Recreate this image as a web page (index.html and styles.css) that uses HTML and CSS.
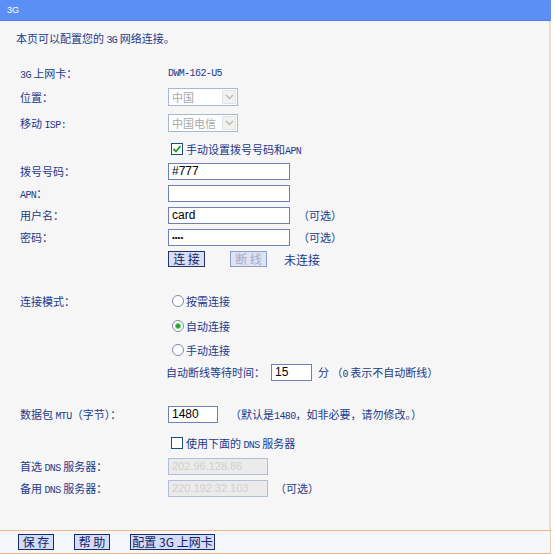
FILE: index.html
```html
<!DOCTYPE html>
<html lang="zh-CN">
<head>
<meta charset="utf-8">
<title>3G</title>
<link rel="stylesheet" href="styles.css">
</head>
<body>
<div class="page">
  <div class="title">3G</div>
  <div class="content">
    <p class="intro">本页可以配置您的 <span class="m">3G</span> 网络连接。</p>
    <div class="form">
      <div class="row r1"><div class="lbl"><span class="m">3G</span> 上网卡：</div><div class="val"><span class="m">DWM-162-U5</span></div></div>
      <div class="row r2"><div class="lbl">位置：</div><div class="val"><div class="sel w70"><span class="sel-text">中国</span><span class="sel-arrow"><svg width="9" height="6" viewBox="0 0 9 6"><path d="M1 1 L4.5 4.5 L8 1" fill="none" stroke="#b9b9b9" stroke-width="1.4"/></svg></span></div></div></div>
      <div class="row r3"><div class="lbl">移动 <span class="m">ISP:</span></div><div class="val"><div class="sel w70"><span class="sel-text">中国电信</span><span class="sel-arrow"><svg width="9" height="6" viewBox="0 0 9 6"><path d="M1 1 L4.5 4.5 L8 1" fill="none" stroke="#b9b9b9" stroke-width="1.4"/></svg></span></div></div></div>
      <div class="row r4"><div class="lbl"></div><div class="val"><span class="cb cb-on"><svg width="10" height="10" viewBox="0 0 10 10"><path d="M1.5 5 L4 7.5 L8.5 2" fill="none" stroke="#1f9d1f" stroke-width="1.8"/></svg></span><span class="cb-label">手动设置拨号号码和<span class="m">APN</span></span></div></div>
      <div class="row r5"><div class="lbl">拨号号码：</div><div class="val"><input class="txt w122" type="text" value="#777"></div></div>
      <div class="row r6"><div class="lbl"><span class="m">APN</span>：</div><div class="val"><input class="txt w122" type="text" value=""></div></div>
      <div class="row r7"><div class="lbl">用户名：</div><div class="val"><input class="txt w122" type="text" value="card"><span class="opt">（可选）</span></div></div>
      <div class="row r8"><div class="lbl">密码：</div><div class="val"><input class="txt w122 pw" type="password" value="card"><span class="opt">（可选）</span></div></div>
      <div class="row r9"><div class="lbl"></div><div class="val"><button class="btn btn-connect">连 接</button><button class="btn btn-off" disabled>断 线</button><span class="status">未连接</span></div></div>

      <div class="row r10"><div class="lbl">连接模式：</div><div class="val"><span class="radio"></span><span class="radio-label">按需连接</span></div></div>
      <div class="row r11"><div class="lbl"></div><div class="val"><span class="radio radio-on"><span class="dot"></span></span><span class="radio-label">自动连接</span></div></div>
      <div class="row r12"><div class="lbl"></div><div class="val"><span class="radio"></span><span class="radio-label">手动连接</span></div></div>
      <div class="row r13"><div class="lbl"></div><div class="val shift"><span>自动断线等待时间：</span><input class="txt w41 wait" type="text" value="15"><span class="unit">分 （<span class="m">0</span> 表示不自动断线）</span></div></div>

      <div class="row r14"><div class="lbl">数据包 <span class="m">MTU</span>（字节）：</div><div class="val"><input class="txt w50" type="text" value="1480"><span class="note">（默认是<span class="m">1480</span>，如非必要，请勿修改。）</span></div></div>
      <div class="row r15"><div class="lbl"></div><div class="val"><span class="cb"></span><span class="cb-label">使用下面的 <span class="m">DNS</span> 服务器</span></div></div>
      <div class="row r16"><div class="lbl">首选 <span class="m">DNS</span> 服务器：</div><div class="val"><input class="txt w100 dis" type="text" value="202.96.128.86" disabled></div></div>
      <div class="row r17"><div class="lbl">备用 <span class="m">DNS</span> 服务器：</div><div class="val"><input class="txt w100 dis" type="text" value="220.192.32.103" disabled><span class="opt2">（可选）</span></div></div>
    </div>
  </div>
  <div class="footer">
    <button class="btn fbtn w36">保 存</button>
    <button class="btn fbtn w36">帮 助</button>
    <button class="btn fbtn w85">配置 3G 上网卡</button>
  </div>
</div>
</body>
</html>
```

FILE: styles.css
```css
html, body {
  margin: 0;
  padding: 0;
  background: #ffffff;
}

body {
  font-family: "Noto Sans CJK SC", "Noto Sans", sans-serif;
  font-size: 11px;
  color: #1b3a8c;
}

.page {
  width: 551px;
  height: 554px;
  display: flex;
  flex-direction: column;
}

.title {
  height: 20px;
  line-height: 20px;
  background: #5b8ff5;
  border-bottom: 1px solid #4d7fe4;
  color: #ffffff;
  font-family: "Liberation Sans", sans-serif;
  font-size: 9px;
  padding-left: 7px;
}

.content {
  flex: 1;
  background: #f6f6f6;
  border-right: 2px solid #f0dcc0;
}

.intro {
  margin: 0;
  padding: 10px 0 0 16px;
  line-height: 14px;
}

.m {
  font-family: "Liberation Mono", monospace;
  font-size: 10px;
  letter-spacing: -0.6px;
}

.form {
  padding-left: 20px;
  margin-top: 14px;
}

.row {
  display: flex;
  align-items: center;
  height: 22px;
}

.lbl {
  width: 148px;
  flex: none;
}

.val {
  display: flex;
  align-items: center;
}

.r2 { margin-top: 2px; }
.r3 { margin-top: 4px; }
.r4 { margin-top: 4px; }
.r10 { margin-top: 20px; }
.r11 { margin-top: 3px; }
.r12 { margin-top: 2px; }
.r14 { margin-top: 20px; }
.r15 { margin-top: 7px; }
.r16 { margin-top: 1px; }

/* fake select */
.sel {
  box-sizing: border-box;
  height: 18px;
  border: 1px solid #a9b6d6;
  background: #ffffff;
  display: flex;
  align-items: center;
  justify-content: space-between;
  padding: 0 1px 0 3px;
}
.w70 { width: 70px; }
.sel-text {
  color: #a8a8a8;
  font-size: 11px;
}
.sel-arrow {
  width: 14px;
  height: 14px;
  box-sizing: border-box;
  background: #f1f1ee;
  border: 1px solid #e0e3ea;
  display: flex;
  align-items: center;
  justify-content: center;
}

/* checkbox */
.cb {
  box-sizing: border-box;
  width: 12px;
  height: 12px;
  margin-left: 3px;
  border: 1px solid #1c4f7c;
  background: #ffffff;
  display: flex;
  align-items: center;
  justify-content: center;
}
.cb-label {
  margin-left: 3px;
}

/* text inputs */
.txt {
  box-sizing: border-box;
  height: 17px;
  border: 1px solid #6f7fb8;
  background: #ffffff;
  padding: 0 3px;
  margin: 0;
  font-family: "Liberation Sans", sans-serif;
  font-size: 12px;
  color: #000000;
  outline: none;
}
.w122 { width: 122px; }
.w41 { width: 41px; }
.w50 { width: 50px; }
.w100 { width: 100px; }
.pw {
  font-size: 8px;
  letter-spacing: 0;
}
.dis {
  background: #ebebeb;
  border-color: #b4bdd8;
  color: #cfcfcf;
  font-size: 11px;
}

.opt {
  margin-left: 8px;
}
.opt2 {
  margin-left: 7px;
}

/* buttons */
.btn {
  box-sizing: border-box;
  height: 16px;
  margin: 0;
  padding: 0;
  border: 1px solid #24346a;
  background: #d8dff3;
  color: #12226a;
  font-family: "Noto Sans CJK SC", sans-serif;
  font-size: 12px;
  line-height: 14px;
}
.btn-connect {
  width: 37px;
}
.btn-off {
  width: 37px;
  margin-left: 25px;
  border-color: #8e9cc8;
  color: #a3abc4;
  background: #dde3f4;
}
.status {
  margin-left: 17px;
  font-size: 12px;
}

/* radio */
.radio {
  box-sizing: border-box;
  width: 12px;
  height: 12px;
  margin-left: 4px;
  border-radius: 50%;
  border: 1px solid #7d8aa6;
  background: #ffffff;
  display: flex;
  align-items: center;
  justify-content: center;
}
.radio-on .dot {
  width: 4px;
  height: 4px;
  border-radius: 50%;
  background: #25a125;
  box-shadow: 0 0 0 1px #7fcf7f;
}
.radio-label {
  margin-left: 2px;
}

.shift {
  margin-left: -2px;
}
.wait {
  margin-left: 6px;
}
.unit {
  margin-left: 6px;
}
.note {
  margin-left: 12px;
}

/* footer */
.footer {
  height: 22px;
  background: #f3f6fa;
  border-top: 1px solid #f0b888;
  border-bottom: 1px solid #f0b888;
  border-right: 1px solid #f0c8a8;
  display: flex;
  align-items: center;
  padding-left: 18px;
  gap: 20px;
}
.fbtn {
  height: 16px;
  background: #d3dbf5;
  border-color: #1e2c66;
  font-size: 12px;
}
.w36 { width: 36px; }
.w85 { width: 85px; }
```
